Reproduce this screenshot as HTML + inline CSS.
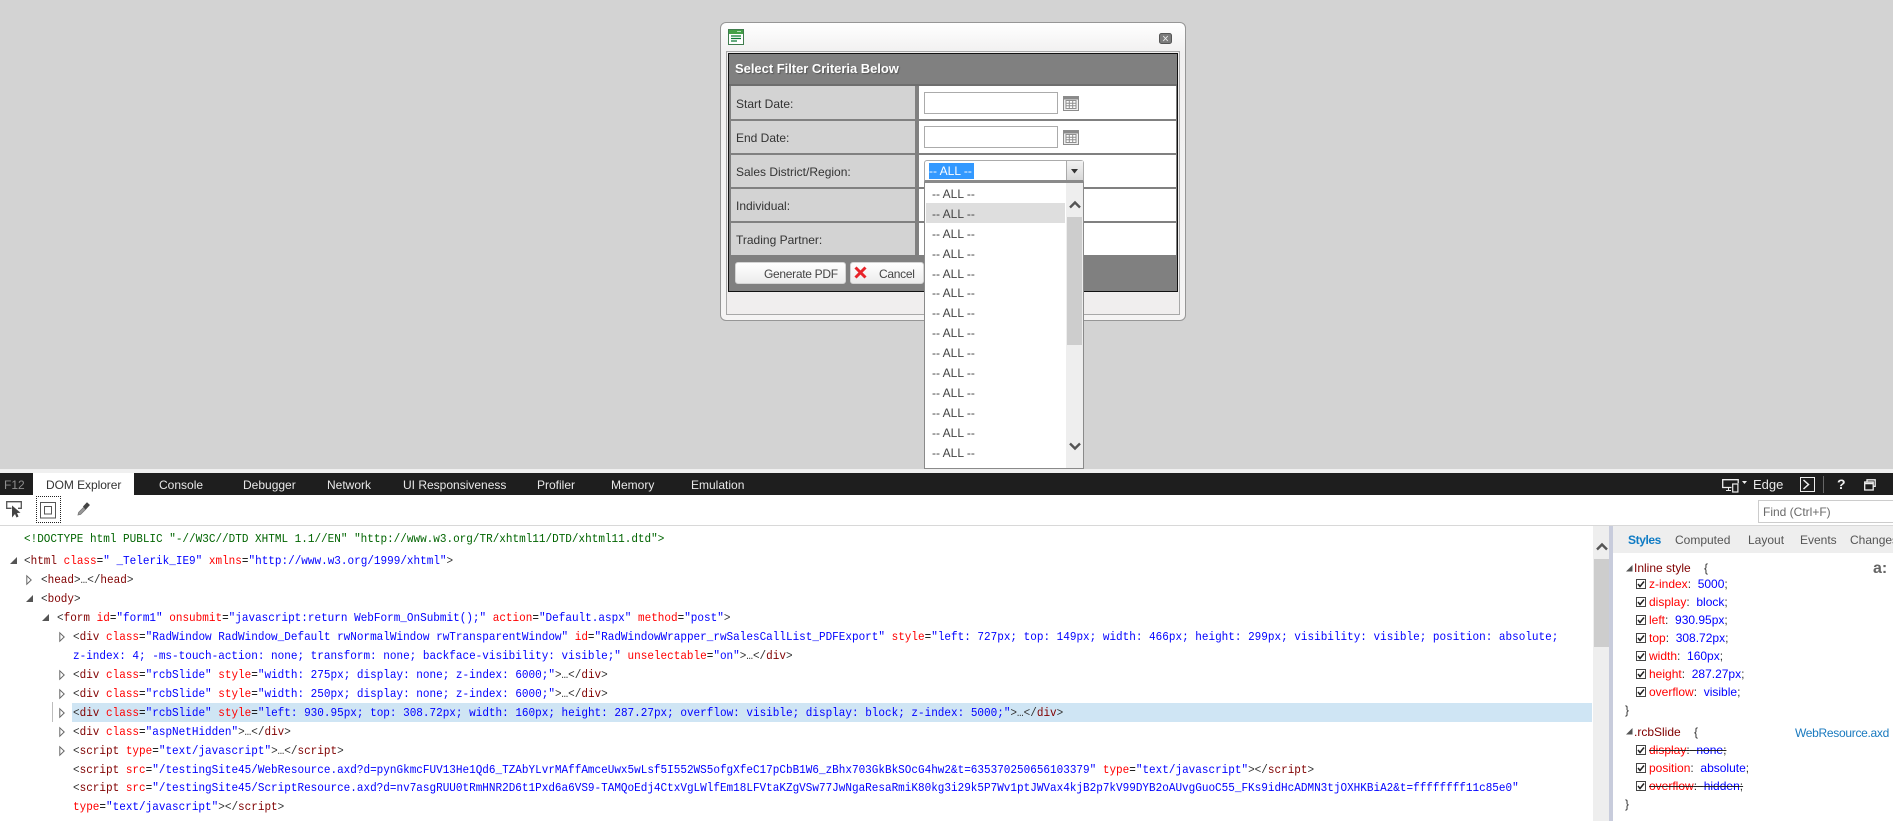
<!DOCTYPE html>
<html><head><meta charset="utf-8"><title>F12 DOM Explorer</title>
<style>
html,body{margin:0;padding:0;background:#fff}
#p{position:relative;width:1893px;height:821px;overflow:hidden;font-family:"Liberation Sans",sans-serif;font-size:12px;color:#333;background:#fff}
.b{position:absolute;box-sizing:border-box}
.x{position:absolute;white-space:pre;line-height:16px}
.c{position:absolute;white-space:pre;font-family:"Liberation Mono",monospace;font-size:12px;line-height:19px;height:19px;transform:scaleX(.9167);transform-origin:0 0;color:#333}
.t{color:#800000}.a{color:#f00}.v{color:#00f}.e{color:#000}
.tab{position:absolute;top:477px;color:#e8e8e8;line-height:16px;white-space:pre}
.lbl{position:absolute;left:731px;width:184px;background:#d3d3d3;height:33px;line-height:34px;padding-left:5px;box-sizing:border-box;color:#333}
.val{position:absolute;left:919px;width:257px;background:#fff;height:33px}
.i{position:absolute;left:932px;line-height:20px;color:#444;white-space:pre}
.p{position:absolute;white-space:pre;line-height:16px;color:#f00}
.p b{font-weight:normal;color:#00f}.p i{font-style:normal;color:#333}
.s{text-decoration:line-through;text-decoration-color:#222}
.cb{position:absolute;left:1636px;width:10px;height:10px}
svg{position:absolute;display:block;overflow:visible}
</style></head><body><div id="p">
<div class="b" style="left:0;top:0;width:1893px;height:469px;background:#d3d3d3"></div>

<!-- Dialog -->
<div class="b" style="left:720px;top:22px;width:466px;height:299px;border:1px solid #969696;border-radius:6px;background:linear-gradient(#fff 0,#f1f0f0 30px,#f5f4f4 100%)"></div>
<svg style="left:728px;top:29px" width="16" height="16" viewBox="0 0 16 16"><rect x=".5" y=".5" width="15" height="15" fill="#fff" stroke="#3f7d4d"/><rect x="1" y="1" width="14" height="4" fill="#43a047"/><path d="M9 2.5h4" stroke="#b7e0bc"/><path d="M3 7h10M3 9.5h10M3 12h6" stroke="#0a7a33" stroke-width="1.2"/></svg>
<svg style="left:1159px;top:33px" width="13" height="11" viewBox="0 0 13 11"><rect x=".5" y=".5" width="12" height="10" rx="2" fill="#7c7c7c" stroke="#555"/><path d="M4.2 3l4.6 5M8.8 3L4.2 8" stroke="#eee" stroke-width=".9"/></svg>
<div class="b" style="left:726px;top:51px;width:454px;height:264px;border:1px solid #a8a8a8;background:#f0eeee"></div>
<div class="b" style="left:728px;top:53px;width:450px;height:239px;border:1px solid #111;background:#808080"></div>
<div class="x" style="left:735px;top:61px;color:#fff;font-weight:bold;font-size:13px;letter-spacing:-.03px;text-shadow:1px 1px 1px #555">Select Filter Criteria Below</div>
<div class="b" style="left:729px;top:84px;width:448px;height:2px;background:#6e6e6e"></div>

<div class="lbl" style="top:86px;line-height:37px">Start Date:</div><div class="val" style="top:86px"></div>
<div class="lbl" style="top:121px;height:32px">End Date:</div><div class="val" style="top:121px;height:32px"></div>
<div class="lbl" style="top:155px;height:32px">Sales District/Region:</div><div class="val" style="top:155px;height:32px"></div>
<div class="lbl" style="top:189px;height:32px">Individual:</div><div class="val" style="top:189px;height:32px"></div>
<div class="lbl" style="top:223px;height:32px;line-height:35px">Trading Partner:</div><div class="val" style="top:223px;height:32px"></div>

<div class="b" style="left:924px;top:92px;width:134px;height:22px;border:1px solid #ababab;background:#fff"></div>
<div class="b" style="left:924px;top:126px;width:134px;height:22px;border:1px solid #ababab;background:#fff"></div>
<svg style="left:1063px;top:96px" width="16" height="15" viewBox="0 0 16 15"><rect x=".5" y=".5" width="15" height="14" fill="#eee" stroke="#8c8c8c"/><rect x="1" y="1" width="14" height="2.5" fill="#8a8a8a"/><path d="M3 4.5h10v8H3zM3 7.2h10M3 9.8h10M6.3 4.5v8M9.7 4.5v8" fill="#fff" stroke="#8f8f8f" stroke-width="1"/></svg>
<svg style="left:1063px;top:130px" width="16" height="15" viewBox="0 0 16 15"><rect x=".5" y=".5" width="15" height="14" fill="#eee" stroke="#8c8c8c"/><rect x="1" y="1" width="14" height="2.5" fill="#8a8a8a"/><path d="M3 4.5h10v8H3zM3 7.2h10M3 9.8h10M6.3 4.5v8M9.7 4.5v8" fill="#fff" stroke="#8f8f8f" stroke-width="1"/></svg>

<!-- footer buttons -->
<div class="b" style="left:735px;top:262px;width:111px;height:22px;border:1px solid #d4d4d4;border-radius:3px;background:linear-gradient(#fff,#ececec)"></div>
<div class="x" style="left:764px;top:266px;color:#444;letter-spacing:-.3px">Generate PDF</div>
<div class="b" style="left:850px;top:262px;width:74px;height:22px;border:1px solid #d4d4d4;border-radius:3px;background:linear-gradient(#fff,#ececec)"></div>
<svg style="left:854px;top:266px" width="13" height="13" viewBox="0 0 13 13"><path d="M1.5 1.5l10 10M11.5 1.5l-10 10" stroke="#e8242a" stroke-width="3"/></svg>
<div class="x" style="left:879px;top:266px;color:#444;letter-spacing:-.3px">Cancel</div>

<!-- Combo -->
<div class="b" style="left:924px;top:160px;width:160px;height:22px;border:1px solid #ababab;border-bottom:2px solid #8a8a8a;border-radius:3px 3px 0 0;background:#fff"></div>
<div class="b" style="left:1066px;top:161px;width:17px;height:19px;background:linear-gradient(#f2f2f2,#d8d8d8);border-left:1px solid #aaa"></div>
<svg style="left:1070px;top:169px" width="9" height="5" viewBox="0 0 9 5"><path d="M1 0h7L4.5 4.5z" fill="#333"/></svg>
<div class="b" style="left:929px;top:163px;width:45px;height:16px;background:#3399ff"></div>
<div class="x" style="left:929px;top:163px;color:#fff">-- ALL --</div>

<!-- Dropdown -->
<div class="b" style="left:924px;top:182px;width:160px;height:287px;background:#fff;border:1px solid #8a8a8a;border-top:1px solid #8a8a8a"></div>
<div class="b" style="left:926px;top:203px;width:139px;height:20px;background:#dedede"></div>
<div class="b" style="left:1066px;top:183px;width:17px;height:285px;background:#eeeeee"></div>
<div class="b" style="left:1067px;top:217px;width:15px;height:128px;background:#cdcdcd"></div>
<svg style="left:1069px;top:200px" width="12" height="9" viewBox="0 0 12 9"><path d="M1 7.5l5-5 5 5" fill="none" stroke="#555" stroke-width="2.4"/></svg>
<svg style="left:1069px;top:442px" width="12" height="9" viewBox="0 0 12 9"><path d="M1 1.5l5 5 5-5" fill="none" stroke="#555" stroke-width="2.4"/></svg>
<div class="i" style="top:184px">-- ALL --</div><div class="i" style="top:204px">-- ALL --</div><div class="i" style="top:224px">-- ALL --</div><div class="i" style="top:244px">-- ALL --</div><div class="i" style="top:264px">-- ALL --</div><div class="i" style="top:283px">-- ALL --</div><div class="i" style="top:303px">-- ALL --</div><div class="i" style="top:323px">-- ALL --</div><div class="i" style="top:343px">-- ALL --</div><div class="i" style="top:363px">-- ALL --</div><div class="i" style="top:383px">-- ALL --</div><div class="i" style="top:403px">-- ALL --</div><div class="i" style="top:423px">-- ALL --</div><div class="i" style="top:443px">-- ALL --</div>

<!-- F12 bar -->
<div class="b" style="left:0;top:469px;width:1893px;height:4px;background:#f0f0f0"></div>
<div class="b" style="left:0;top:473px;width:1893px;height:22px;background:#1e1e1e"></div>
<div class="b" style="left:33px;top:473px;width:101px;height:22px;background:#fff"></div>
<div class="tab" style="left:4px;color:#8e8e8e">F12</div>
<div class="tab" style="left:46px;color:#333;letter-spacing:-.06px">DOM Explorer</div>
<div class="tab" style="left:159px">Console</div>
<div class="tab" style="left:243px">Debugger</div>
<div class="tab" style="left:327px">Network</div>
<div class="tab" style="left:403px">UI Responsiveness</div>
<div class="tab" style="left:537px">Profiler</div>
<div class="tab" style="left:611px">Memory</div>
<div class="tab" style="left:691px">Emulation</div>

<svg style="left:1722px;top:479px" width="26" height="14" viewBox="0 0 26 14"><path d="M9.5 8.5H.7V.7h15.5v3.6" fill="none" stroke="#eee" stroke-width="1.3"/><path d="M4 11.5h5M6.5 9v2.5" stroke="#eee"/><rect x="10.7" y="5" width="5.2" height="8" fill="#1e1e1e" stroke="#eee" stroke-width="1.2"/><path d="M20 2h5l-2.5 3z" fill="#eee"/></svg>
<div class="tab" style="left:1753px;font-size:13px">Edge</div>
<svg style="left:1800px;top:477px" width="15" height="15" viewBox="0 0 15 15"><rect x=".5" y=".5" width="14" height="14" fill="#1e1e1e" stroke="#eee"/><path d="M3.5 3l5 4.5-5 4.5" fill="none" stroke="#eee" stroke-width="1.5"/></svg>
<div class="b" style="left:1823px;top:476px;width:1px;height:17px;background:#666"></div>
<div class="tab" style="left:1837px;top:476px;font-weight:bold;font-size:14px;color:#f0f0f0">?</div>
<svg style="left:1864px;top:479px" width="12" height="12" viewBox="0 0 12 12"><path d="M3 2.5V.8h8.2v6.5H9.4" fill="none" stroke="#eee" stroke-width="1.3"/><rect x=".7" y="3" width="8.5" height="8" fill="#1e1e1e" stroke="#eee" stroke-width="1.3"/><path d="M1 4.5h8" stroke="#eee" stroke-width="1.5"/></svg>

<!-- toolbar -->
<div class="b" style="left:0;top:525px;width:1893px;height:1px;background:#d8d8d8"></div>
<svg style="left:6px;top:501px" width="17" height="18" viewBox="0 0 17 18"><path d="M5.5 7.3H.7V.7h14.6v6.6H12" fill="none" stroke="#555" stroke-width="1.3"/><path d="M6 4.5v12l3-3.5 1.5 3.5 2-1-1.5-3.5 3.5-.3z" fill="#444"/></svg>
<div class="b" style="left:36px;top:496px;width:25px;height:27px;border:1px dotted #222"></div>
<svg style="left:40px;top:502px" width="16" height="17" viewBox="0 0 16 17"><rect x=".5" y=".5" width="15" height="15.5" fill="none" stroke="#555"/><rect x="4.5" y="4.5" width="7" height="7.5" fill="none" stroke="#555"/></svg>
<svg style="left:77px;top:502px" width="13" height="14" viewBox="0 0 13 14"><path d="M1 13l.6-2.6 5-5 2 2-5 5z" fill="#999" stroke="#777" stroke-width=".8"/><path d="M6.5 4.5L10 .8l2.4 2.2L8.8 7z" fill="#444" stroke="#444" stroke-width=".8"/></svg>
<div class="b" style="left:1758px;top:500px;width:135px;height:23px;border:1px solid #ccc;border-right:0;background:#fff"></div>
<div class="x" style="left:1763px;top:504px;color:#6a6a6a;">Find (Ctrl+F)</div>

<!-- code -->
<div class="b" style="left:72px;top:703px;width:1520px;height:19px;background:#cfe5f4"></div>
<div class="b" style="left:52px;top:702px;width:1px;height:20px;background:#bdbdbd"></div>

<svg style="left:10px;top:557px" width="8" height="8" viewBox="0 0 8 8"><path d="M7 0v7H0z" fill="#555"/></svg>
<svg style="left:26px;top:595px" width="8" height="8" viewBox="0 0 8 8"><path d="M7 0v7H0z" fill="#555"/></svg>
<svg style="left:42px;top:614px" width="8" height="8" viewBox="0 0 8 8"><path d="M7 0v7H0z" fill="#555"/></svg>
<svg style="left:26px;top:575px" width="6" height="10" viewBox="0 0 6 10"><path d="M.8.8l4.4 4.2L.8 9.2z" fill="#fff" stroke="#666"/></svg>
<svg style="left:59px;top:632px" width="6" height="10" viewBox="0 0 6 10"><path d="M.8.8l4.4 4.2L.8 9.2z" fill="#fff" stroke="#666"/></svg>
<svg style="left:59px;top:670px" width="6" height="10" viewBox="0 0 6 10"><path d="M.8.8l4.4 4.2L.8 9.2z" fill="#fff" stroke="#666"/></svg>
<svg style="left:59px;top:689px" width="6" height="10" viewBox="0 0 6 10"><path d="M.8.8l4.4 4.2L.8 9.2z" fill="#fff" stroke="#666"/></svg>
<svg style="left:59px;top:708px" width="6" height="10" viewBox="0 0 6 10"><path d="M.8.8l4.4 4.2L.8 9.2z" fill="#fff" stroke="#666"/></svg>
<svg style="left:59px;top:727px" width="6" height="10" viewBox="0 0 6 10"><path d="M.8.8l4.4 4.2L.8 9.2z" fill="#fff" stroke="#666"/></svg>
<svg style="left:59px;top:746px" width="6" height="10" viewBox="0 0 6 10"><path d="M.8.8l4.4 4.2L.8 9.2z" fill="#fff" stroke="#666"/></svg>

<div class="c" style="left:24px;top:529.5px;color:#006400">&lt;!DOCTYPE html PUBLIC "-//W3C//DTD XHTML 1.1//EN" "http://www.w3.org/TR/xhtml11/DTD/xhtml11.dtd"&gt;</div>
<div class="c" style="left:24px;top:552px">&lt;<span class="t">html</span> <span class="a">class</span><span class="e">=</span><span class="v">" _Telerik_IE9"</span> <span class="a">xmlns</span><span class="e">=</span><span class="v">"http://www.w3.org/1999/xhtml"</span>&gt;</div>
<div class="c" style="left:40.5px;top:570.5px">&lt;<span class="t">head</span>&gt;…&lt;/<span class="t">head</span>&gt;</div>
<div class="c" style="left:40.5px;top:589.5px">&lt;<span class="t">body</span>&gt;</div>
<div class="c" style="left:56.5px;top:608.5px">&lt;<span class="t">form</span> <span class="a">id</span><span class="e">=</span><span class="v">"form1"</span> <span class="a">onsubmit</span><span class="e">=</span><span class="v">"javascript:return WebForm_OnSubmit();"</span> <span class="a">action</span><span class="e">=</span><span class="v">"Default.aspx"</span> <span class="a">method</span><span class="e">=</span><span class="v">"post"</span>&gt;</div>
<div class="c" style="left:72.5px;top:627.5px">&lt;<span class="t">div</span> <span class="a">class</span><span class="e">=</span><span class="v">"RadWindow RadWindow_Default rwNormalWindow rwTransparentWindow"</span> <span class="a">id</span><span class="e">=</span><span class="v">"RadWindowWrapper_rwSalesCallList_PDFExport"</span> <span class="a">style</span><span class="e">=</span><span class="v">"left: 727px; top: 149px; width: 466px; height: 299px; visibility: visible; position: absolute;</span></div>
<div class="c" style="left:72.5px;top:646.5px"><span class="v">z-index: 4; -ms-touch-action: none; transform: none; backface-visibility: visible;"</span> <span class="a">unselectable</span><span class="e">=</span><span class="v">"on"</span>&gt;…&lt;/<span class="t">div</span>&gt;</div>
<div class="c" style="left:72.5px;top:665.5px">&lt;<span class="t">div</span> <span class="a">class</span><span class="e">=</span><span class="v">"rcbSlide"</span> <span class="a">style</span><span class="e">=</span><span class="v">"width: 275px; display: none; z-index: 6000;"</span>&gt;…&lt;/<span class="t">div</span>&gt;</div>
<div class="c" style="left:72.5px;top:684.5px">&lt;<span class="t">div</span> <span class="a">class</span><span class="e">=</span><span class="v">"rcbSlide"</span> <span class="a">style</span><span class="e">=</span><span class="v">"width: 250px; display: none; z-index: 6000;"</span>&gt;…&lt;/<span class="t">div</span>&gt;</div>
<div class="c" style="left:72.5px;top:703.5px">&lt;<span class="t">div</span> <span class="a">class</span><span class="e">=</span><span class="v">"rcbSlide"</span> <span class="a">style</span><span class="e">=</span><span class="v">"left: 930.95px; top: 308.72px; width: 160px; height: 287.27px; overflow: visible; display: block; z-index: 5000;"</span>&gt;…&lt;/<span class="t">div</span>&gt;</div>
<div class="c" style="left:72.5px;top:722.5px">&lt;<span class="t">div</span> <span class="a">class</span><span class="e">=</span><span class="v">"aspNetHidden"</span>&gt;…&lt;/<span class="t">div</span>&gt;</div>
<div class="c" style="left:72.5px;top:741.5px">&lt;<span class="t">script</span> <span class="a">type</span><span class="e">=</span><span class="v">"text/javascript"</span>&gt;…&lt;/<span class="t">script</span>&gt;</div>
<div class="c" style="left:72.5px;top:760.5px">&lt;<span class="t">script</span> <span class="a">src</span><span class="e">=</span><span class="v">"/testingSite45/WebResource.axd?d=pynGkmcFUV13He1Qd6_TZAbYLvrMAffAmceUwx5wLsf5I552WS5ofgXfeC17pCbB1W6_zBhx703GkBkSOcG4hw2&amp;t=635370250656103379"</span> <span class="a">type</span><span class="e">=</span><span class="v">"text/javascript"</span>&gt;&lt;/<span class="t">script</span>&gt;</div>
<div class="c" style="left:72.5px;top:778.5px">&lt;<span class="t">script</span> <span class="a">src</span><span class="e">=</span><span class="v">"/testingSite45/ScriptResource.axd?d=nv7asgRUU0tRmHNR2D6t1Pxd6a6VS9-TAMQoEdj4CtxVgLWlfEm18LFVtaKZgVSw77JwNgaResaRmiK80kg3i29k5P7Wv1ptJWVax4kjB2p7kV99DYB2oAUvgGuoC55_FKs9idHcADMN3tjOXHKBiA2&amp;t=ffffffff11c85e0"</span></div>
<div class="c" style="left:72.5px;top:797.5px"><span class="a">type</span><span class="e">=</span><span class="v">"text/javascript"</span>&gt;&lt;/<span class="t">script</span>&gt;</div>

<!-- main scrollbar + splitter -->
<div class="b" style="left:1593px;top:526px;width:16px;height:295px;background:#eeeeee"></div>
<div class="b" style="left:1594px;top:559px;width:15px;height:88px;background:#cdcdcd"></div>
<svg style="left:1596px;top:542px" width="12" height="9" viewBox="0 0 12 9"><path d="M1 7.5l5-5 5 5" fill="none" stroke="#555" stroke-width="2.4"/></svg>
<div class="b" style="left:1609px;top:526px;width:4px;height:295px;background:#c8ccdc"></div>

<!-- styles panel -->
<div class="b" style="left:1613px;top:526px;width:280px;height:27px;background:#eeeeee"></div>
<div class="x" style="left:1628px;top:532px;color:#0f7bc4;font-weight:bold;letter-spacing:-.4px">Styles</div>
<div class="x" style="left:1675px;top:532px;color:#555">Computed</div>
<div class="x" style="left:1748px;top:532px;color:#555">Layout</div>
<div class="x" style="left:1800px;top:532px;color:#555">Events</div>
<div class="x" style="left:1850px;top:532px;color:#555">Changes</div>

<svg style="left:1626px;top:565px" width="7" height="7" viewBox="0 0 7 7"><path d="M6.5 0v6.5H0z" fill="#555"/></svg>
<svg style="left:1626px;top:728px" width="7" height="7" viewBox="0 0 7 7"><path d="M6.5 0v6.5H0z" fill="#555"/></svg>
<div class="p" style="left:1634px;top:560px;color:#800000;">Inline style  <i>  {</i></div>
<div class="x" style="left:1873px;top:561px;font-weight:bold;font-size:16px;color:#666">a:</div>

<svg class="cb" style="top:579px" viewBox="0 0 10 10"><rect x=".5" y=".5" width="9" height="9" fill="#fff" stroke="#444"/><path d="M2 5l2 2.5L8 2.5" fill="none" stroke="#222" stroke-width="1.5"/></svg>
<div class="p" style="left:1649px;top:576px">z-index<i>:</i>  <b>5000</b><i>;</i></div>
<svg class="cb" style="top:597px" viewBox="0 0 10 10"><rect x=".5" y=".5" width="9" height="9" fill="#fff" stroke="#444"/><path d="M2 5l2 2.5L8 2.5" fill="none" stroke="#222" stroke-width="1.5"/></svg>
<div class="p" style="left:1649px;top:594px">display<i>:</i>  <b>block</b><i>;</i></div>
<svg class="cb" style="top:615px" viewBox="0 0 10 10"><rect x=".5" y=".5" width="9" height="9" fill="#fff" stroke="#444"/><path d="M2 5l2 2.5L8 2.5" fill="none" stroke="#222" stroke-width="1.5"/></svg>
<div class="p" style="left:1649px;top:612px">left<i>:</i>  <b>930.95px</b><i>;</i></div>
<svg class="cb" style="top:633px" viewBox="0 0 10 10"><rect x=".5" y=".5" width="9" height="9" fill="#fff" stroke="#444"/><path d="M2 5l2 2.5L8 2.5" fill="none" stroke="#222" stroke-width="1.5"/></svg>
<div class="p" style="left:1649px;top:630px">top<i>:</i>  <b>308.72px</b><i>;</i></div>
<svg class="cb" style="top:651px" viewBox="0 0 10 10"><rect x=".5" y=".5" width="9" height="9" fill="#fff" stroke="#444"/><path d="M2 5l2 2.5L8 2.5" fill="none" stroke="#222" stroke-width="1.5"/></svg>
<div class="p" style="left:1649px;top:648px">width<i>:</i>  <b>160px</b><i>;</i></div>
<svg class="cb" style="top:669px" viewBox="0 0 10 10"><rect x=".5" y=".5" width="9" height="9" fill="#fff" stroke="#444"/><path d="M2 5l2 2.5L8 2.5" fill="none" stroke="#222" stroke-width="1.5"/></svg>
<div class="p" style="left:1649px;top:666px">height<i>:</i>  <b>287.27px</b><i>;</i></div>
<svg class="cb" style="top:687px" viewBox="0 0 10 10"><rect x=".5" y=".5" width="9" height="9" fill="#fff" stroke="#444"/><path d="M2 5l2 2.5L8 2.5" fill="none" stroke="#222" stroke-width="1.5"/></svg>
<div class="p" style="left:1649px;top:684px">overflow<i>:</i>  <b>visible</b><i>;</i></div>
<div class="p" style="left:1625px;top:702px"><i>}</i></div>

<div class="p" style="left:1634px;top:724px;color:#800000">.rcbSlide  <i>  {</i></div>
<div class="x" style="left:1795px;top:725px;color:#1a7abf;letter-spacing:-.3px">WebResource.axd</div>
<svg class="cb" style="top:745px" viewBox="0 0 10 10"><rect x=".5" y=".5" width="9" height="9" fill="#fff" stroke="#444"/><path d="M2 5l2 2.5L8 2.5" fill="none" stroke="#222" stroke-width="1.5"/></svg>
<div class="p s" style="left:1649px;top:742px">display<i>:</i>  <b>none</b><i>;</i></div>
<svg class="cb" style="top:763px" viewBox="0 0 10 10"><rect x=".5" y=".5" width="9" height="9" fill="#fff" stroke="#444"/><path d="M2 5l2 2.5L8 2.5" fill="none" stroke="#222" stroke-width="1.5"/></svg>
<div class="p" style="left:1649px;top:760px">position<i>:</i>  <b>absolute</b><i>;</i></div>
<svg class="cb" style="top:781px" viewBox="0 0 10 10"><rect x=".5" y=".5" width="9" height="9" fill="#fff" stroke="#444"/><path d="M2 5l2 2.5L8 2.5" fill="none" stroke="#222" stroke-width="1.5"/></svg>
<div class="p s" style="left:1649px;top:778px">overflow<i>:</i>  <b>hidden</b><i>;</i></div>
<div class="p" style="left:1625px;top:796px"><i>}</i></div>
</div></body></html>
